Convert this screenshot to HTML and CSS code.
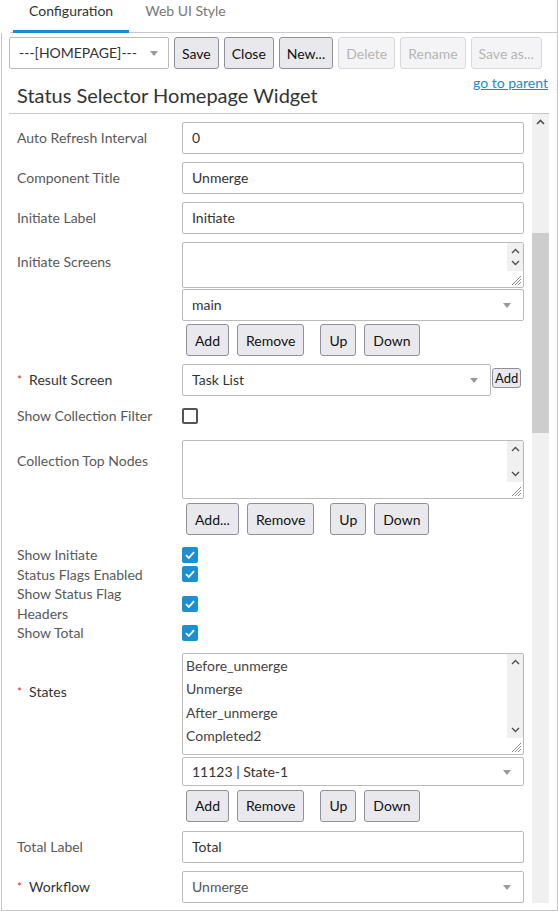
FILE: index.html
```html
<!DOCTYPE html>
<html lang="en">
<head>
    <meta charset="UTF-8">
    <meta name="viewport" content="width=device-width, initial-scale=1.0">
    <title>Status Selector Homepage Widget</title>
    <link rel="stylesheet" href="styles.css">
</head>
<body>
<div class="window">
    <!-- Tabs -->
    <div class="tabs">
        <div class="tab active">Configuration</div>
        <div class="tab">Web UI Style</div>
    </div>

    <div class="panel">
        <!-- Toolbar -->
        <div class="toolbar">
            <div class="select page-select">---[HOMEPAGE]---<span class="caret"></span></div>
            <button class="btn">Save</button>
            <button class="btn">Close</button>
            <button class="btn">New...</button>
            <button class="btn" disabled>Delete</button>
            <button class="btn" disabled>Rename</button>
            <button class="btn" disabled>Save as...</button>
        </div>

        <div class="title-row">
            <h1>Status Selector Homepage Widget</h1>
            <a href="#" class="parent-link">go to parent</a>
        </div>

        <!-- Form -->
        <div class="form-area">
            <div class="form">
                <div class="row">
                    <label class="lbl">Auto Refresh Interval</label>
                    <div class="field"><div class="input">0</div></div>
                </div>
                <div class="row">
                    <label class="lbl">Component Title</label>
                    <div class="field"><div class="input">Unmerge</div></div>
                </div>
                <div class="row">
                    <label class="lbl">Initiate Label</label>
                    <div class="field"><div class="input">Initiate</div></div>
                </div>
                <div class="row">
                    <label class="lbl lbl-screens">Initiate Screens</label>
                    <div class="field">
                        <div class="listbox lb-screens">
                            <div class="list-items"></div>
                            <div class="list-scroll">
                                <svg width="9" height="6" viewBox="0 0 9 6"><path d="M1 5L4.5 1.5L8 5" fill="none" stroke="#505050" stroke-width="1.4"/></svg>
                                <svg width="9" height="6" viewBox="0 0 9 6"><path d="M1 1L4.5 4.5L8 1" fill="none" stroke="#505050" stroke-width="1.4"/></svg>
                            </div>
                            <svg class="grip" width="12" height="12" viewBox="0 0 12 12"><path d="M11 2L2 11M11 5L5 11M11 8L8 11" stroke="#8a8a8a" stroke-width="1"/></svg>
                        </div>
                        <div class="select select-under">main<span class="caret"></span></div>
                        <div class="btn-group">
                            <button class="btn">Add</button>
                            <button class="btn">Remove</button>
                            <button class="btn btn-up">Up</button>
                            <button class="btn">Down</button>
                        </div>
                    </div>
                </div>
                <div class="row">
                    <label class="lbl req"><span class="star">*</span>Result Screen</label>
                    <div class="field field-inline">
                        <div class="select select-result">Task List<span class="caret"></span></div>
                        <button class="btn btn-mini">Add</button>
                    </div>
                </div>
                <div class="row row-filter">
                    <label class="lbl lbl-flat">Show Collection Filter</label>
                    <div class="field field-check"><span class="check"></span></div>
                </div>
                <div class="row row-nodes">
                    <label class="lbl lbl-nodes">Collection Top Nodes</label>
                    <div class="field">
                        <div class="listbox lb-nodes">
                            <div class="list-items"></div>
                            <div class="list-scroll">
                                <svg width="9" height="6" viewBox="0 0 9 6"><path d="M1 5L4.5 1.5L8 5" fill="none" stroke="#505050" stroke-width="1.4"/></svg>
                                <svg width="9" height="6" viewBox="0 0 9 6"><path d="M1 1L4.5 4.5L8 1" fill="none" stroke="#505050" stroke-width="1.4"/></svg>
                            </div>
                            <svg class="grip" width="12" height="12" viewBox="0 0 12 12"><path d="M11 2L2 11M11 5L5 11M11 8L8 11" stroke="#8a8a8a" stroke-width="1"/></svg>
                        </div>
                        <div class="btn-group">
                            <button class="btn">Add...</button>
                            <button class="btn">Remove</button>
                            <button class="btn btn-up">Up</button>
                            <button class="btn">Down</button>
                        </div>
                    </div>
                </div>

                <div class="checks">
                    <div class="row row-check">
                        <label class="lbl lbl-flat">Show Initiate</label>
                        <div class="field field-check"><span class="check on"><svg width="16" height="16" viewBox="0 0 16 16"><path d="M4 8.2L6.8 11L12 5.2" fill="none" stroke="#fff" stroke-width="1.8"/></svg></span></div>
                    </div>
                    <div class="row row-check">
                        <label class="lbl lbl-flat">Status Flags Enabled</label>
                        <div class="field field-check"><span class="check on"><svg width="16" height="16" viewBox="0 0 16 16"><path d="M4 8.2L6.8 11L12 5.2" fill="none" stroke="#fff" stroke-width="1.8"/></svg></span></div>
                    </div>
                    <div class="row row-check">
                        <label class="lbl lbl-flat">Show Status Flag Headers</label>
                        <div class="field field-check"><span class="check on"><svg width="16" height="16" viewBox="0 0 16 16"><path d="M4 8.2L6.8 11L12 5.2" fill="none" stroke="#fff" stroke-width="1.8"/></svg></span></div>
                    </div>
                    <div class="row row-check">
                        <label class="lbl lbl-flat">Show Total</label>
                        <div class="field field-check"><span class="check on"><svg width="16" height="16" viewBox="0 0 16 16"><path d="M4 8.2L6.8 11L12 5.2" fill="none" stroke="#fff" stroke-width="1.8"/></svg></span></div>
                    </div>
                </div>

                <div class="row row-states">
                    <label class="lbl req lbl-states"><span class="star">*</span>States</label>
                    <div class="field">
                        <div class="listbox lb-states">
                            <div class="list-items">
                                <div class="item">Before_unmerge</div>
                                <div class="item">Unmerge</div>
                                <div class="item">After_unmerge</div>
                                <div class="item">Completed2</div>
                            </div>
                            <div class="list-scroll">
                                <svg width="9" height="6" viewBox="0 0 9 6"><path d="M1 5L4.5 1.5L8 5" fill="none" stroke="#505050" stroke-width="1.4"/></svg>
                                <svg width="9" height="6" viewBox="0 0 9 6"><path d="M1 1L4.5 4.5L8 1" fill="none" stroke="#505050" stroke-width="1.4"/></svg>
                            </div>
                            <svg class="grip" width="12" height="12" viewBox="0 0 12 12"><path d="M11 2L2 11M11 5L5 11M11 8L8 11" stroke="#8a8a8a" stroke-width="1"/></svg>
                        </div>
                        <div class="select select-state">11123 | State-1<span class="caret"></span></div>
                        <div class="btn-group">
                            <button class="btn">Add</button>
                            <button class="btn">Remove</button>
                            <button class="btn btn-up">Up</button>
                            <button class="btn">Down</button>
                        </div>
                    </div>
                </div>
                <div class="row">
                    <label class="lbl">Total Label</label>
                    <div class="field"><div class="input">Total</div></div>
                </div>
                <div class="row">
                    <label class="lbl req"><span class="star">*</span>Workflow</label>
                    <div class="field"><div class="select select-muted">Unmerge<span class="caret"></span></div></div>
                </div>
            </div>

            <!-- Scrollbar of the form -->
            <div class="scrollbar">
                <svg class="scroll-up" width="9" height="6" viewBox="0 0 9 6"><path d="M1 5L4.5 1.5L8 5" fill="none" stroke="#505050" stroke-width="1.6"/></svg>
                <div class="scroll-thumb"></div>
            </div>
        </div>
    </div>
</div>
</body>
</html>
```

FILE: styles.css
```css
/* Base */
* {
    box-sizing: border-box;
}

body {
    margin: 0;
    background-color: #fff;
    font-family: "Segoe UI", Lato, sans-serif;
    font-size: 14px;
    color: #333;
}

.window {
    width: 558px;
    height: 911px;
    border-right: 1px solid #c4c4c4;
    display: flex;
    flex-direction: column;
}

/* Tabs */
.tabs {
    display: flex;
    margin-left: 10px;
    padding-left: 3px;
    border-bottom: 1px solid #c8c8c8;
    height: 33px;
}

.tab {
    height: 33px;
    padding: 0 16px;
    line-height: 21px;
    color: #777;
    border-bottom: 3px solid transparent;
    margin-bottom: -1px;
}

.tab.active {
    color: #333;
    border-bottom-color: #1a8bd0;
}

/* Panel */
.panel {
    flex: 1;
    margin-left: 1px;
    border-left: 1px solid #c4c4c4;
    border-bottom: 1px solid #c4c4c4;
    padding: 0 8px 0 7px;
    display: flex;
    flex-direction: column;
}

.toolbar {
    display: flex;
    gap: 5px;
    padding-top: 4px;
}

.toolbar > * {
    flex-shrink: 0;
}

.toolbar .btn {
    padding: 0 7px;
}

.btn {
    font-family: inherit;
    font-size: 14px;
    height: 32px;
    padding: 0 8px;
    color: #111;
    white-space: nowrap;
    background-color: #e9e9ed;
    border: 1px solid #8f8f9d;
    border-radius: 3px;
}

.btn:disabled {
    color: #b4b4b4;
    background-color: #f4f4f6;
    border-color: #d8d8dc;
}

.select {
    position: relative;
    height: 32px;
    line-height: 30px;
    padding-left: 9px;
    border: 1px solid #bbb;
    border-radius: 2px;
    color: #333;
    background-color: #fff;
    white-space: nowrap;
}

.caret {
    position: absolute;
    right: 12px;
    top: 13px;
    border-left: 4.5px solid transparent;
    border-right: 4.5px solid transparent;
    border-top: 5px solid #9a9a9a;
}

.page-select {
    width: 160px;
}

.page-select .caret {
    right: 10px;
}

.title-row {
    display: flex;
    justify-content: space-between;
    align-items: flex-start;
    height: 44px;
    padding-left: 8px;
}

.title-row h1 {
    margin: 12px 0 0;
    font-size: 20px;
    line-height: 28px;
    font-weight: normal;
    color: #333;
}

.parent-link {
    margin-top: 4px;
    margin-right: 1px;
    line-height: 20px;
    color: #1a8bd0;
    text-decoration: underline;
}

/* Form */
.form-area {
    display: flex;
    height: 790px;
    border-top: 1px solid #c8c8c8;
    overflow: hidden;
}

.form {
    flex: 1;
    padding: 8px 8px 0 8px;
}

.row {
    display: flex;
    margin-bottom: 8px;
}

.lbl {
    width: 165px;
    flex-shrink: 0;
    padding: 6px 20px 0 0;
    line-height: 20px;
    color: #595959;
}

.lbl.req {
    color: #333;
}

.star {
    color: #e0302a;
    font-size: 12px;
    margin-right: 7px;
    vertical-align: 1px;
}

.lbl-screens {
    padding-top: 10px;
}

.lbl-nodes {
    padding-top: 11px;
}

.lbl-states {
    padding-top: 29px;
}

.lbl-flat {
    padding-top: 0;
}

.field {
    flex: 1;
}

.field-inline {
    display: flex;
    align-items: flex-start;
}

.input {
    height: 32px;
    line-height: 30px;
    padding-left: 9px;
    border: 1px solid #bbb;
    border-radius: 2px;
    color: #333;
}

.select-under {
    margin-top: 1px;
}

.select-result {
    width: 309px;
}

.select-state {
    height: 29px;
    line-height: 27px;
    margin-top: 2px;
}

.select-state .caret {
    top: 12px;
}

.select-muted {
    color: #555;
}

.btn-mini {
    height: 20px;
    padding: 0 2px;
    margin: 4px 0 0 1px;
    font-size: 13px;
    line-height: 16px;
}

.btn-group {
    display: flex;
    gap: 8px;
    margin: 3px 0 0 4px;
}

.row-nodes .btn-group {
    margin-top: 4px;
}

.row-states {
    margin-bottom: 9px;
}

.row-states .btn-group {
    margin-top: 4px;
}

.btn-up {
    margin-left: 8px;
}

/* Listbox with own scroll column */
.listbox {
    position: relative;
    display: flex;
    border: 1px solid #bbb;
    border-radius: 2px;
}

.lb-screens {
    height: 46px;
}

.lb-nodes {
    height: 59px;
}

.lb-states {
    height: 102px;
}

.list-items {
    flex: 1;
    padding: 0 0 0 3px;
}

.item {
    line-height: 23.5px;
    color: #444;
}

.list-scroll {
    width: 16px;
    margin: 0 0 16px 0;
    padding: 5px 0;
    background-color: #f0f0f0;
    display: flex;
    flex-direction: column;
    justify-content: space-between;
    align-items: center;
}

.grip {
    position: absolute;
    right: 1px;
    bottom: 1px;
}

/* Checkboxes */
.row-filter {
    height: 24px;
    align-items: center;
    margin-bottom: 12px;
}

.row-nodes {
    margin-bottom: 10px;
}

.checks {
    margin-bottom: 10px;
}

.row-check {
    margin-bottom: 0;
    align-items: center;
}

.row-check .lbl {
    line-height: 19.5px;
}

.field-check {
    display: flex;
    align-items: center;
}

.check {
    display: block;
    width: 16px;
    height: 16px;
    border: 2px solid #555;
    border-radius: 2px;
}

.check.on {
    border: none;
    background-color: #1b8fd2;
}

.check svg {
    display: block;
}

/* Scrollbar */
.scrollbar {
    width: 17px;
    background-color: #f0f0f0;
    display: flex;
    flex-direction: column;
    align-items: center;
}

.scroll-up {
    margin-top: 5px;
}

.scroll-thumb {
    width: 17px;
    height: 200px;
    margin-top: 108px;
    background-color: #cdcdcd;
}
```
